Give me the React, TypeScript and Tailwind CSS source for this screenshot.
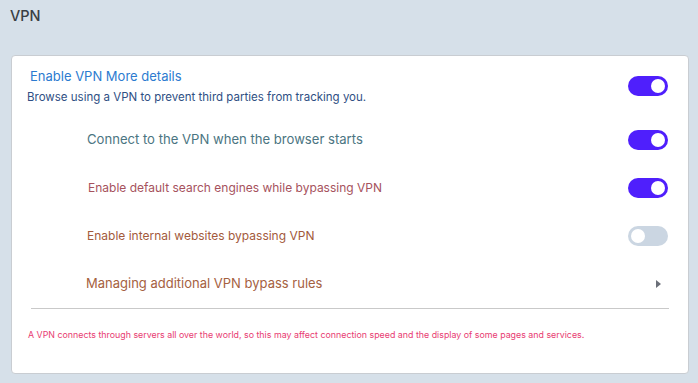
import React, { useState } from 'react';

const Toggle: React.FC<{ on: boolean; onChange: () => void }> = ({ on, onChange }) => (
  <button
    onClick={onChange}
    className={`relative w-[40px] h-[20px] rounded-full shrink-0 ${on ? 'bg-[#4f1ffc]' : 'bg-[#cbd6e2]'}`}
  >
    <span
      className={`absolute top-[3px] w-[14px] h-[14px] rounded-full bg-white ${on ? 'left-[23px]' : 'left-[3px]'}`}
    />
  </button>
);

export default function App() {
  const [vpn, setVpn] = useState(true);
  const [startup, setStartup] = useState(true);
  const [search, setSearch] = useState(true);
  const [internal, setInternal] = useState(false);

  return (
    <div className="w-[698px] h-[383px] bg-[#d6e0e9] pt-[6px] px-[11px] font-['Inter',sans-serif]">
      <h1 className="text-[14.5px] font-medium text-[#3a3f45] leading-[20px] ml-[-1px]">VPN</h1>

      <div className="mt-[29px] w-[678px] h-[319px] bg-white border border-[#c9cdd2] rounded-[4px] pt-[11px]">
        {/* Main toggle */}
        <div className="flex items-start pl-[15px] pr-[20px]">
          <div className="flex-1">
            <div className="text-[13px] leading-[18px] text-[#2c7bd0] pl-[3px]">Enable VPN More details</div>
            <div className="text-[11.5px] leading-[16px] text-[#2f4f84] mt-[4px]">
              Browse using a VPN to prevent third parties from tracking you.
            </div>
          </div>
          <div className="mt-[9px]">
            <Toggle on={vpn} onChange={() => setVpn(!vpn)} />
          </div>
        </div>

        {/* Sub options */}
        <div className="flex items-center h-[48px] mt-[11px] pl-[75px] pr-[20px]">
          <span className="flex-1 text-[13.1px] text-[#4b7582]">Connect to the VPN when the browser starts</span>
          <Toggle on={startup} onChange={() => setStartup(!startup)} />
        </div>
        <div className="flex items-center h-[48px] pl-[76px] pr-[20px]">
          <span className="flex-1 text-[12px] text-[#a6525d]">Enable default search engines while bypassing VPN</span>
          <Toggle on={search} onChange={() => setSearch(!search)} />
        </div>
        <div className="flex items-center h-[48px] pl-[75px] pr-[20px]">
          <span className="flex-1 text-[12px] text-[#a35a3c]">Enable internal websites bypassing VPN</span>
          <Toggle on={internal} onChange={() => setInternal(!internal)} />
        </div>
        <div className="flex items-center h-[48px] pl-[74px] pr-[27px]">
          <span className="flex-1 text-[13px] text-[#a5613f]">Managing additional VPN bypass rules</span>
          <svg width="5" height="8" viewBox="0 0 5 8">
            <path d="M0 0 L5 4 L0 8 Z" fill="#6b6f78" />
          </svg>
        </div>

        <div className="mx-[19px] border-t border-[#c9c9c9]" />

        <p className="mt-[19px] pl-[16px] text-[8.85px] text-[#e83c72]">
          A VPN connects through servers all over the world, so this may affect connection speed and the display of some pages and services.
        </p>
      </div>
    </div>
  );
}
